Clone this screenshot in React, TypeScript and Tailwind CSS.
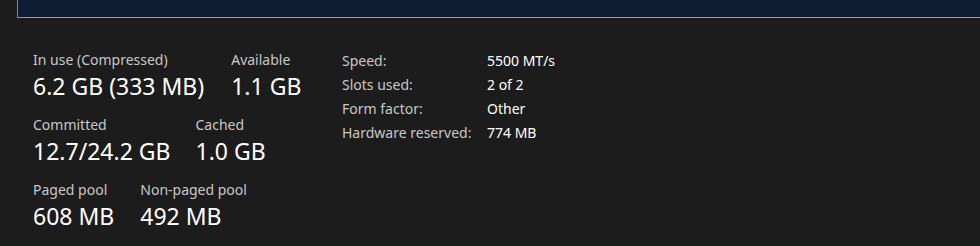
export default function App() {
  return (
    <div className="w-[980px] h-[246px] bg-[#1c1c1c] overflow-hidden font-['Noto_Sans',sans-serif] text-white">
      {/* graph panel */}
      <div className="ml-[17px] h-[18px] bg-[#0e1c33] border-l border-b border-l-[#8a8a8a] border-b-[#7aa3dc]" />

      <div className="flex pl-[33px] pt-[32px]">
        {/* left stats */}
        <div className="flex flex-col gap-[13px] w-[309px]">
          <div className="flex gap-[27px]">
            <Stat label="In use (Compressed)" value="6.2 GB (333 MB)" />
            <Stat label="Available" value="1.1 GB" />
          </div>
          <div className="flex gap-[25px]">
            <Stat label="Committed" value="12.7/24.2 GB" />
            <Stat label="Cached" value="1.0 GB" />
          </div>
          <div className="flex gap-[26px]">
            <Stat label="Paged pool" value="608 MB" />
            <Stat label="Non-paged pool" value="492 MB" />
          </div>
        </div>

        {/* right details */}
        <div className="grid grid-cols-[145px_auto] auto-rows-[24px] items-center text-[14px] mt-[-2px]">
          <span className="text-[#c8c8c8]">Speed:</span>
          <span>5500 MT/s</span>
          <span className="text-[#c8c8c8]">Slots used:</span>
          <span>2 of 2</span>
          <span className="text-[#c8c8c8]">Form factor:</span>
          <span>Other</span>
          <span className="text-[#c8c8c8]">Hardware reserved:</span>
          <span>774 MB</span>
        </div>
      </div>
    </div>
  );
}

function Stat({ label, value }: { label: string; value: string }) {
  return (
    <div className="flex flex-col">
      <span className="text-[14px] leading-[20px] text-[#c8c8c8]">{label}</span>
      <span className="text-[23px] leading-[32px]">{value}</span>
    </div>
  );
}
